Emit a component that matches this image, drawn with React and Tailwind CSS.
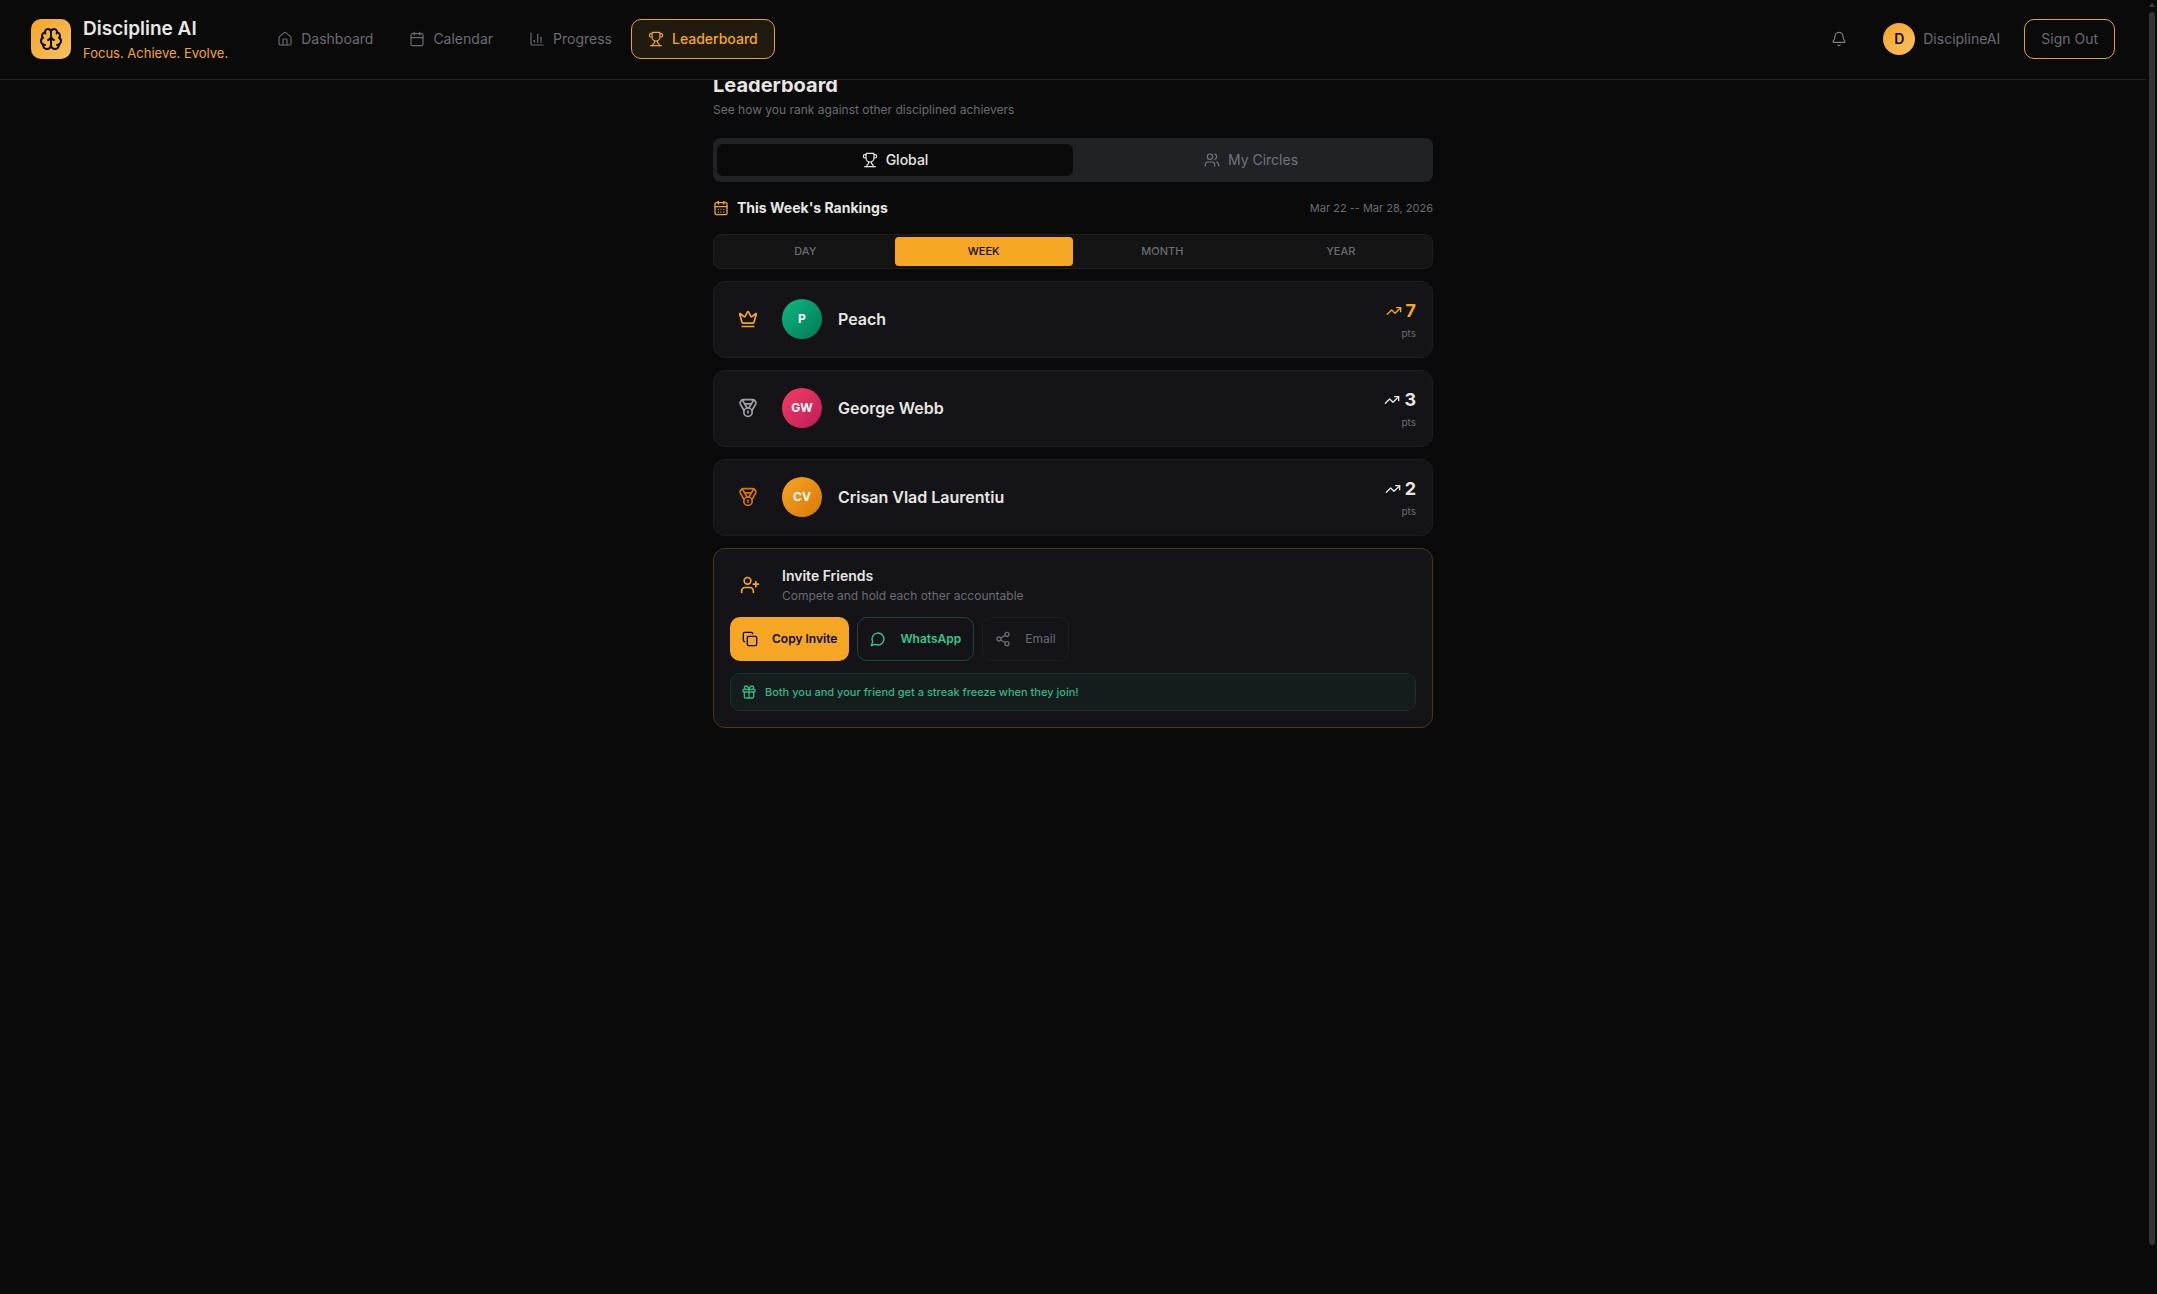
import {
  Bell,
  Brain,
  Calendar,
  CalendarDays,
  ChartColumn,
  Copy,
  Crown,
  Gift,
  House,
  Medal,
  Share2,
  TrendingUp,
  Trophy,
  UserPlus,
  Users,
} from "lucide-react";

const navItems = [
  { label: "Dashboard", icon: House },
  { label: "Calendar", icon: Calendar },
  { label: "Progress", icon: ChartColumn },
  { label: "Leaderboard", icon: Trophy, active: true },
];

const periods = ["Day", "Week", "Month", "Year"];

const rankings = [
  {
    name: "Peach",
    initials: "P",
    points: 7,
    icon: Crown,
    iconColor: "text-[#f5a623]",
    avatar: "from-[#10b981] to-[#047857]",
    pointsColor: "text-[#f5a623]",
  },
  {
    name: "George Webb",
    initials: "GW",
    points: 3,
    icon: Medal,
    iconColor: "text-[#a1a1aa]",
    avatar: "from-[#f43f5e] to-[#be185d]",
    pointsColor: "text-[#e8e6e3]",
  },
  {
    name: "Crisan Vlad Laurentiu",
    initials: "CV",
    points: 2,
    icon: Medal,
    iconColor: "text-[#d97706]",
    avatar: "from-[#f5a623] to-[#d97706]",
    pointsColor: "text-[#e8e6e3]",
  },
];

const ChatBubble = () => (
  <svg
    className="size-4 shrink-0"
    viewBox="0 0 24 24"
    fill="none"
    stroke="currentColor"
    strokeWidth="2"
    strokeLinecap="round"
    strokeLinejoin="round"
    aria-hidden="true"
  >
    <path d="M7.9 20A9 9 0 1 0 4 16.1L2 22Z" />
  </svg>
);

const Header = () => (
  <header className="fixed inset-x-0 top-0 z-10 mr-2.5 flex h-20 items-center border-b border-[#222222] bg-[#0a0a0a] pr-8 pb-px pl-[31px]">
    <a href="#home" className="flex items-center gap-3">
      <span className="flex size-10 items-center justify-center rounded-[10px] bg-linear-to-br from-[#f5a623] to-[#f7bf5e] text-[#0a0a0a]">
        <Brain className="size-6" />
      </span>
      <span>
        <span className="block text-[19px] leading-7 font-semibold text-[#e8e6e3]">Discipline AI</span>
        <span className="block text-[13px] leading-5 text-[#f5a623]">Focus. Achieve. Evolve.</span>
      </span>
    </a>

    <nav className="ml-8 flex items-center gap-0.5">
      {navItems.map(({ label, icon: Icon, active }) => (
        <a
          key={label}
          href={`#${label.toLowerCase()}`}
          className={`flex h-10 items-center gap-2 rounded-[10px] border px-4 text-sm ${
            active
              ? "border-[#e0a33a] bg-[#211a0f] font-medium text-[#f5a623]"
              : "border-transparent text-[#6b6b73]"
          }`}
        >
          <Icon className="size-4" strokeWidth={1.75} />
          {label}
        </a>
      ))}
    </nav>

    <div className="ml-auto flex items-center gap-6 text-sm text-[#6b6b73]">
      <button type="button" aria-label="Notifications" className="flex size-10 items-center justify-center text-[#7c7c85]">
        <Bell className="size-4" strokeWidth={1.75} />
      </button>
      <div className="flex items-center gap-2">
        <span className="flex size-8 items-center justify-center rounded-full bg-linear-to-br from-[#f5a623] to-[#f7bf5e] font-semibold text-[#0a0a0a]">
          D
        </span>
        DisciplineAI
      </div>
      <button type="button" className="h-10 rounded-[10px] border border-[#e0a33a] px-4">
        Sign Out
      </button>
    </div>
  </header>
);

const RankingCard = ({ entry }) => {
  const Icon = entry.icon;
  return (
    <li className="flex items-center gap-4 rounded-xl border border-[#1d1d22] bg-[#141418] px-4 pt-[15px] pb-4">
      <span className={`flex w-9 justify-center ${entry.iconColor}`}>
        <Icon className="size-5" />
      </span>
      <span
        className={`flex size-10 items-center justify-center rounded-full bg-linear-to-br text-xs font-bold text-white ${entry.avatar}`}
      >
        {entry.initials}
      </span>
      <span className="min-w-0 flex-1 truncate text-base font-semibold text-[#e8e6e3]">{entry.name}</span>
      <span className="text-right">
        <span className={`flex items-center justify-end gap-1 text-lg leading-7 font-bold ${entry.pointsColor}`}>
          <TrendingUp className="size-4" />
          {entry.points}
        </span>
        <span className="block text-[10px] leading-4 text-[#6b6b73]">pts</span>
      </span>
    </li>
  );
};

const InviteCard = () => (
  <section className="mt-3 rounded-xl border border-[#4d3818] bg-[#141418] p-4">
    <div className="flex items-center gap-3">
      <span className="flex size-10 items-center justify-center text-[#f5a623]">
        <UserPlus className="size-5" />
      </span>
      <div>
        <h3 className="text-sm leading-[22px] font-semibold text-[#e8e6e3]">Invite Friends</h3>
        <p className="text-xs leading-[18px] text-[#6b6b73]">Compete and hold each other accountable</p>
      </div>
    </div>

    <div className="mt-3 flex gap-2 text-xs">
      <button
        type="button"
        className="flex h-11 items-center gap-3.5 rounded-[10px] bg-[#f5a623] px-3 font-semibold text-[#0a0a0a]"
      >
        <Copy className="size-4" />
        Copy Invite
      </button>
      <button
        type="button"
        className="flex h-11 items-center gap-3.5 rounded-[10px] border border-[#1b463b] px-3 font-semibold text-[#34c78c]"
      >
        <ChatBubble />
        WhatsApp
      </button>
      <button
        type="button"
        className="flex h-11 items-center gap-3.5 rounded-[10px] border border-[#1d1d22] px-3 text-[#6b6b73]"
      >
        <Share2 className="size-4" />
        Email
      </button>
    </div>

    <p className="mt-3 flex items-center gap-2 rounded-[10px] border border-[#17332d] bg-[#141c1e] p-2.5 text-[11px] leading-4 font-medium text-[#34b883]">
      <Gift className="size-4" />
      Both you and your friend get a streak freeze when they join!
    </p>
  </section>
);

const Scrollbar = () => (
  <div className="fixed inset-y-0 right-0 flex w-2.5 flex-col items-center bg-[#0a0a0a] pt-0.5" aria-hidden="true">
    <svg className="h-1.5 w-2 shrink-0" viewBox="0 0 8 6">
      <path d="M4 0.5 7 5H1Z" fill="#3a3a3a" />
    </svg>
    <div className="mt-1 h-[95.4%] w-1.5 rounded-full bg-[#333333]" />
  </div>
);

const App = () => (
  <div className="min-h-screen bg-[#0a0a0a] pr-[11px] font-['Inter',sans-serif] text-[#e8e6e3]">
    <Header />

    <main className="mx-auto max-w-[720px] pt-[70px] pb-20">
      <h1 className="text-xl leading-[30px] font-bold">Leaderboard</h1>
      <p className="mt-0.5 text-xs leading-4 text-[#6b6b73]">See how you rank against other disciplined achievers</p>

      <div role="tablist" className="mt-5 grid h-11 grid-cols-2 items-center rounded-lg bg-[#212226] px-1 text-sm">
        <button
          type="button"
          role="tab"
          aria-selected="true"
          className="flex h-8 items-center justify-center gap-2 rounded-md bg-[#0a0a0a] font-medium"
        >
          <Trophy className="size-4" strokeWidth={1.75} />
          Global
        </button>
        <button
          type="button"
          role="tab"
          aria-selected="false"
          className="flex h-8 items-center justify-center gap-2 rounded-md text-[#73737c]"
        >
          <Users className="size-4" strokeWidth={1.75} />
          My Circles
        </button>
      </div>

      <div className="my-4 flex h-5 items-center gap-2">
        <CalendarDays className="size-4 text-[#f5a623]" />
        <h2 className="text-sm font-bold">This Week's Rankings</h2>
        <span className="ml-auto text-[11px] text-[#6b6b73]">Mar 22 -- Mar 28, 2026</span>
      </div>

      <div className="grid grid-cols-4 rounded-lg border border-[#1f1f1f] bg-[#141414] p-0.5">
        {periods.map((period) => (
          <button
            key={period}
            type="button"
            className={`h-[29px] rounded-sm text-[11px] font-medium uppercase ${
              period === "Week" ? "bg-[#f5a623] text-[#0a0a0a]" : "text-[#6b6b73]"
            }`}
          >
            {period}
          </button>
        ))}
      </div>

      <ol className="mt-3 flex flex-col gap-3">
        {rankings.map((entry) => (
          <RankingCard key={entry.name} entry={entry} />
        ))}
      </ol>

      <InviteCard />
    </main>

    <Scrollbar />
  </div>
);

export default App;
